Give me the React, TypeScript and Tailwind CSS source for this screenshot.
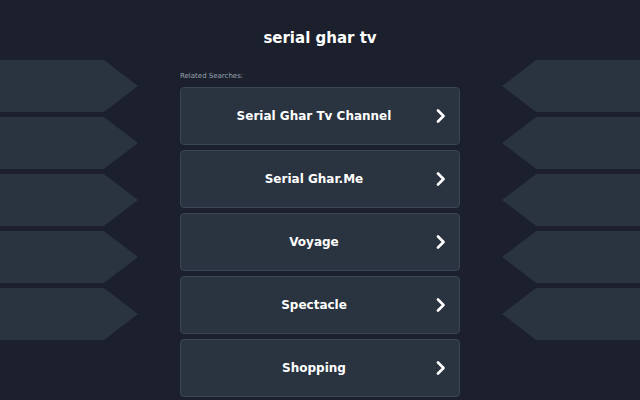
const items = ["Serial Ghar Tv Channel", "Serial Ghar.Me", "Voyage", "Spectacle", "Shopping"]

function Chevron() {
  return (
    <svg width="12" height="14" viewBox="0 0 12 14" className="flex-shrink-0">
      <path d="M3 1.5 L8.5 7 L3 12.5" fill="none" stroke="#ffffff" strokeWidth="2.6" strokeLinecap="round" strokeLinejoin="round" />
    </svg>
  )
}

function SideArrows({ flip }: { flip?: boolean }) {
  return (
    <div className={"flex flex-col gap-[5px] " + (flip ? "items-end" : "items-start")}>
      {[0, 1, 2, 3, 4].map((i) => (
        <svg key={i} width="138" height="52" viewBox="0 0 138 52" className={flip ? "-scale-x-100" : ""}>
          <polygon points="0,0 104,0 138,26 104,52 0,52" fill="#2a3340" />
        </svg>
      ))}
    </div>
  )
}

export default function App() {
  return (
    <div className="relative w-[640px] h-[400px] overflow-hidden bg-[#1b202c] text-white" style={{ fontFamily: "'DejaVu Sans', sans-serif" }}>
      {/* decoration */}
      <div className="absolute left-0 top-[60px]">
        <SideArrows />
      </div>
      <div className="absolute right-0 top-[60px]">
        <SideArrows flip />
      </div>

      <div className="relative flex flex-col items-center">
        <h1 className="mt-[29px] text-[15px] leading-[19px] font-bold">serial ghar tv</h1>
        <div className="w-[280px] mt-[24px]">
          <p className="text-[7px] leading-[9px] text-[#9aa3b2] mb-[6px]">Related Searches:</p>
          <div className="flex flex-col gap-[5px]">
            {items.map((label) => (
              <div key={label} className="h-[58px] flex items-center px-3 rounded-[4px] bg-[#2a3340] border border-[#3a4555]">
                <span className="flex-1 text-center text-[12px] font-bold">{label}</span>
                <Chevron />
              </div>
            ))}
          </div>
        </div>
      </div>
    </div>
  )
}
